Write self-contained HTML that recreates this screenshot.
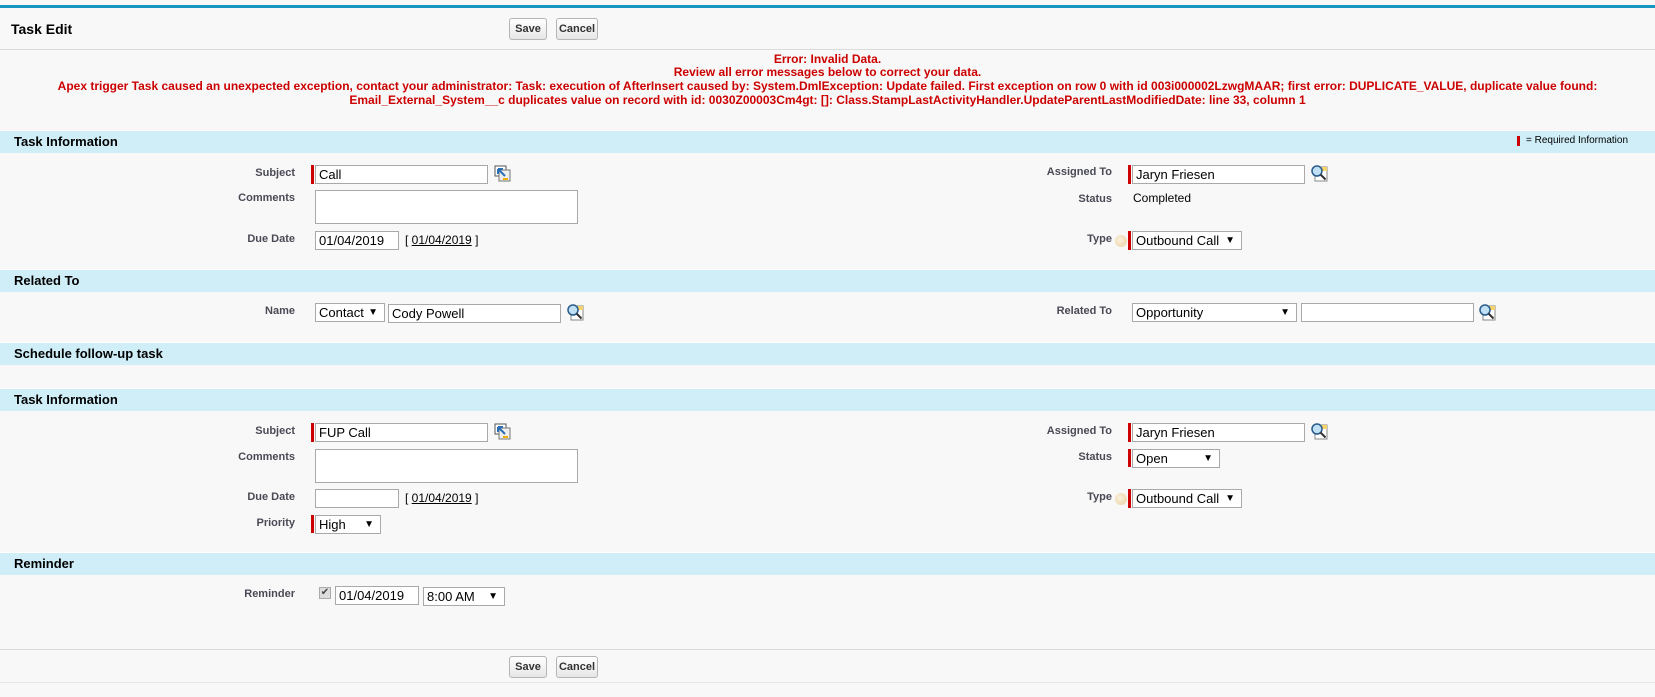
<!DOCTYPE html>
<html><head><meta charset="utf-8"><style>
*{box-sizing:border-box;margin:0;padding:0}
body{width:1655px;height:697px;background:#f8f8f8;font-family:"Liberation Sans",Arial,sans-serif;position:relative;overflow:hidden}
.a{position:absolute}
.topline{left:0;top:5px;width:1655px;height:3px;background:#1797c0}
.hdr{left:0;top:8px;width:1655px;height:42px;border-bottom:1px solid #dcdcdc}
.title{left:11px;top:21px;font-size:14px;font-weight:bold;color:#000}
.btn{height:22px;border:1px solid #b5b5b5;border-radius:3px;background:linear-gradient(#fff,#e6e6e6);font-size:11px;font-weight:bold;color:#333;text-align:center;line-height:20px}
.err{left:0;width:1655px;text-align:center;color:#cc0000;font-size:12px;font-weight:bold;line-height:14px}
.sec{left:0;width:1655px;height:23px;background:#cfeef8;border-top:1px solid #fff;font-size:13px;font-weight:bold;color:#000;padding-left:14px;line-height:21px}
.lbl{font-size:11px;font-weight:bold;color:#4a4a56;text-align:right;width:200px}
.in{height:19px;border:1px solid #a9a9a9;background:#fff;font-size:13px;color:#000;padding-left:3px;line-height:17px;white-space:nowrap}
.req{width:3px;background:#c00}
.sel:after{content:"▼";position:absolute;right:6px;top:0;font-size:10px}
.txt{font-size:12px;color:#000}
.help{width:12px;height:12px;border-radius:50%;background:radial-gradient(circle at 40% 40%,#fbf1dc,#e9cf9f)}
</style></head><body>
<div class="a topline"></div>
<div class="a hdr"></div>
<div class="a title">Task Edit</div>
<div class="a btn" style="left:509px;top:18px;width:38px">Save</div>
<div class="a btn" style="left:556px;top:18px;width:42px">Cancel</div>

<div class="a err" style="top:52px">Error: Invalid Data.</div>
<div class="a err" style="top:65px">Review all error messages below to correct your data.</div>
<div class="a err" style="top:79px">Apex trigger Task caused an unexpected exception, contact your administrator: Task: execution of AfterInsert caused by: System.DmlException: Update failed. First exception on row 0 with id 003i000002LzwgMAAR; first error: DUPLICATE_VALUE, duplicate value found:</div>
<div class="a err" style="top:93px">Email_External_System__c duplicates value on record with id: 0030Z00003Cm4gt: []: Class.StampLastActivityHandler.UpdateParentLastModifiedDate: line 33, column 1</div>

<div class="a sec" style="top:130px">Task Information</div>
<div class="a req" style="left:1517px;top:136px;height:10px"></div>
<div class="a" style="left:1526px;top:135px;font-size:10px;color:#000">= Required Information</div>

<div class="a lbl" style="left:95px;top:167px">Subject</div>
<div class="a req" style="left:311px;top:165px;height:19px"></div>
<div class="a in" style="left:315px;top:165px;width:173px">Call</div>
<svg class="a" style="left:494px;top:165px" width="18" height="18" viewBox="0 0 18 18"><rect x="1" y="1" width="11" height="10" fill="#fff" stroke="#555"/><rect x="5" y="5" width="11" height="11" fill="#eee" stroke="#777"/><path d="M4 4l7 7M4 4v5M4 4h5" stroke="#2a6fb5" stroke-width="2" fill="none"/><rect x="9" y="13" width="5" height="2" fill="#f0b000"/></svg>

<div class="a lbl" style="left:95px;top:192px">Comments</div>
<div class="a in" style="left:315px;top:190px;width:263px;height:34px"></div>
<div class="a lbl" style="left:95px;top:233px">Due Date</div>
<div class="a in" style="left:315px;top:231px;width:84px">01/04/2019</div>
<div class="a lbl" style="left:405px;top:233px;text-align:left;font-weight:normal;color:#000;font-size:12px;width:auto">[ <u>01/04/2019</u> ]</div>

<div class="a lbl" style="left:912px;top:166px">Assigned To</div>
<div class="a req" style="left:1128px;top:165px;height:19px"></div>
<div class="a in" style="left:1132px;top:165px;width:173px">Jaryn Friesen</div>
<svg class="a" style="left:1310px;top:164px" width="18" height="18" viewBox="0 0 18 18"><rect x="5" y="3" width="12" height="14" fill="#fff" stroke="#888"/><rect x="11" y="3" width="6" height="4" fill="#f6d36b"/><circle cx="7" cy="7" r="5" fill="#bfe0f5" stroke="#2a5a8a" stroke-width="1.5"/><path d="M10.5 10.5l5 5" stroke="#333" stroke-width="2"/></svg>
<div class="a lbl" style="left:912px;top:193px">Status</div>
<div class="a txt" style="left:1133px;top:191px">Completed</div>
<div class="a lbl" style="left:912px;top:233px">Type</div>
<div class="a help" style="left:1115px;top:235px"></div>
<div class="a req" style="left:1128px;top:231px;height:19px"></div>
<div class="a in sel" style="left:1132px;top:231px;width:110px">Outbound Call</div>

<div class="a sec" style="top:269px">Related To</div>
<div class="a lbl" style="left:95px;top:305px">Name</div>
<div class="a in sel" style="left:315px;top:303px;width:70px">Contact</div>
<div class="a in" style="left:388px;top:304px;width:173px">Cody Powell</div>
<svg class="a" style="left:566px;top:303px" width="18" height="18" viewBox="0 0 18 18"><rect x="5" y="3" width="12" height="14" fill="#fff" stroke="#888"/><rect x="11" y="3" width="6" height="4" fill="#f6d36b"/><circle cx="7" cy="7" r="5" fill="#bfe0f5" stroke="#2a5a8a" stroke-width="1.5"/><path d="M10.5 10.5l5 5" stroke="#333" stroke-width="2"/></svg>
<div class="a lbl" style="left:912px;top:305px">Related To</div>
<div class="a in sel" style="left:1132px;top:303px;width:165px">Opportunity</div>
<div class="a in" style="left:1301px;top:303px;width:173px"></div>
<svg class="a" style="left:1478px;top:303px" width="18" height="18" viewBox="0 0 18 18"><rect x="5" y="3" width="12" height="14" fill="#fff" stroke="#888"/><rect x="11" y="3" width="6" height="4" fill="#f6d36b"/><circle cx="7" cy="7" r="5" fill="#bfe0f5" stroke="#2a5a8a" stroke-width="1.5"/><path d="M10.5 10.5l5 5" stroke="#333" stroke-width="2"/></svg>

<div class="a sec" style="top:342px">Schedule follow-up task</div>

<div class="a sec" style="top:388px">Task Information</div>
<div class="a lbl" style="left:95px;top:425px">Subject</div>
<div class="a req" style="left:311px;top:423px;height:19px"></div>
<div class="a in" style="left:315px;top:423px;width:173px">FUP Call</div>
<svg class="a" style="left:494px;top:423px" width="18" height="18" viewBox="0 0 18 18"><rect x="1" y="1" width="11" height="10" fill="#fff" stroke="#555"/><rect x="5" y="5" width="11" height="11" fill="#eee" stroke="#777"/><path d="M4 4l7 7M4 4v5M4 4h5" stroke="#2a6fb5" stroke-width="2" fill="none"/><rect x="9" y="13" width="5" height="2" fill="#f0b000"/></svg>
<div class="a lbl" style="left:95px;top:451px">Comments</div>
<div class="a in" style="left:315px;top:449px;width:263px;height:34px"></div>
<div class="a lbl" style="left:95px;top:491px">Due Date</div>
<div class="a in" style="left:315px;top:489px;width:84px"></div>
<div class="a lbl" style="left:405px;top:491px;text-align:left;font-weight:normal;color:#000;font-size:12px;width:auto">[ <u>01/04/2019</u> ]</div>
<div class="a lbl" style="left:95px;top:517px">Priority</div>
<div class="a req" style="left:311px;top:515px;height:18px"></div>
<div class="a in sel" style="left:315px;top:515px;width:66px">High</div>

<div class="a lbl" style="left:912px;top:425px">Assigned To</div>
<div class="a req" style="left:1128px;top:423px;height:19px"></div>
<div class="a in" style="left:1132px;top:423px;width:173px">Jaryn Friesen</div>
<svg class="a" style="left:1310px;top:422px" width="18" height="18" viewBox="0 0 18 18"><rect x="5" y="3" width="12" height="14" fill="#fff" stroke="#888"/><rect x="11" y="3" width="6" height="4" fill="#f6d36b"/><circle cx="7" cy="7" r="5" fill="#bfe0f5" stroke="#2a5a8a" stroke-width="1.5"/><path d="M10.5 10.5l5 5" stroke="#333" stroke-width="2"/></svg>
<div class="a lbl" style="left:912px;top:451px">Status</div>
<div class="a req" style="left:1128px;top:449px;height:18px"></div>
<div class="a in sel" style="left:1132px;top:449px;width:88px">Open</div>
<div class="a lbl" style="left:912px;top:491px">Type</div>
<div class="a help" style="left:1115px;top:493px"></div>
<div class="a req" style="left:1128px;top:489px;height:19px"></div>
<div class="a in sel" style="left:1132px;top:489px;width:110px">Outbound Call</div>

<div class="a sec" style="top:552px">Reminder</div>
<div class="a lbl" style="left:95px;top:588px">Reminder</div>
<div class="a" style="left:319px;top:587px;width:12px;height:12px;border:1px solid #aaa;background:#ddd;font-size:10px;line-height:10px;text-align:center;color:#444">✔</div>
<div class="a in" style="left:335px;top:586px;width:84px">01/04/2019</div>
<div class="a in sel" style="left:423px;top:587px;width:82px">8:00 AM</div>

<div class="a" style="left:0;top:649px;width:1655px;height:34px;border-top:1px solid #dcdcdc;border-bottom:1px solid #e6e6e6"></div>
<div class="a btn" style="left:509px;top:656px;width:38px">Save</div>
<div class="a btn" style="left:556px;top:656px;width:42px">Cancel</div>
</body></html>
